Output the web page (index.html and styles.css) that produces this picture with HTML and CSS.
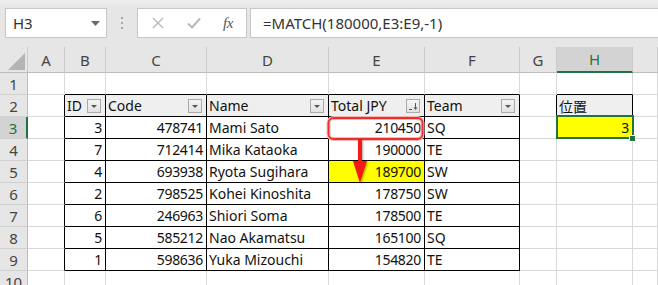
FILE: index.html
```html
<!DOCTYPE html>
<html lang="ja">
<head>
<meta charset="utf-8">
<title>MATCH</title>
<link rel="stylesheet" href="styles.css">
</head>
<body>
<div class="app">
  <div class="fbar">
    <div class="namebox">
      <span class="nb-text">H3</span>
      <svg class="nb-dd" width="9" height="5" viewBox="0 0 9 5"><path d="M0 0h9L4.5 5z" fill="#6a6a6a"/></svg>
    </div>
    <div class="grip"><i></i><i></i><i></i></div>
    <div class="fbtns">
      <svg class="ico-x" width="12" height="12" viewBox="0 0 12 12"><path d="M1 1L11 11M11 1L1 11" stroke="#b8b8b8" stroke-width="1.4" fill="none"/></svg>
      <svg class="ico-ok" width="14" height="12" viewBox="0 0 14 12"><path d="M1 6.5L5 10.5L13 1.5" stroke="#b8b8b8" stroke-width="2" fill="none"/></svg>
      <span class="fx">fx</span>
    </div>
    <div class="finput">=MATCH(180000,E3:E9,-1)</div>
  </div>

  <div class="grid">
    <!-- header row -->
    <div class="c hd corner"><svg width="17" height="17" viewBox="0 0 17 17"><path d="M17 0V17H0z" fill="#b4b4b4"/></svg></div>
    <div class="c hd">A</div>
    <div class="c hd">B</div>
    <div class="c hd">C</div>
    <div class="c hd">D</div>
    <div class="c hd">E</div>
    <div class="c hd">F</div>
    <div class="c hd">G</div>
    <div class="c hd hsel">H</div>
    <div class="c hd"></div>

    <!-- row 1 -->
    <div class="c rh">1</div>
    <div class="c"></div>
    <div class="c tt"></div>
    <div class="c tt"></div>
    <div class="c tt"></div>
    <div class="c tt"></div>
    <div class="c tt"></div>
    <div class="c"></div>
    <div class="c tt"></div>
    <div class="c"></div>

    <!-- row 2 -->
    <div class="c rh">2</div>
    <div class="c tl"></div>
    <div class="c t th"><span>ID</span><span class="dd"><svg width="12" height="12" viewBox="0 0 12 12"><path d="M3 5h6l-3 3z" fill="#555"/></svg></span></div>
    <div class="c t th"><span>Code</span><span class="dd"><svg width="12" height="12" viewBox="0 0 12 12"><path d="M3 5h6l-3 3z" fill="#555"/></svg></span></div>
    <div class="c t th"><span>Name</span><span class="dd"><svg width="12" height="12" viewBox="0 0 12 12"><path d="M3 5h6l-3 3z" fill="#555"/></svg></span></div>
    <div class="c t th"><span>Total JPY</span><span class="dd"><svg width="12" height="12" viewBox="0 0 12 12"><path d="M2 9.5h3" stroke="#555" stroke-width="1"/><path d="M8.5 3v6" stroke="#555" stroke-width="1"/><path d="M6.5 7.5h4l-2 2.5z" fill="#555"/></svg></span></div>
    <div class="c t th"><span>Team</span><span class="dd"><svg width="12" height="12" viewBox="0 0 12 12"><path d="M3 5h6l-3 3z" fill="#555"/></svg></span></div>
    <div class="c tl"></div>
    <div class="c t th jp">位置</div>
    <div class="c"></div>

    <!-- row 3 -->
    <div class="c rh rsel">3</div>
    <div class="c tl"></div>
    <div class="c t num">3</div>
    <div class="c t num">478741</div>
    <div class="c t">Mami Sato</div>
    <div class="c t num">210450</div>
    <div class="c t">SQ</div>
    <div class="c"></div>
    <div class="c num yel active">3</div>
    <div class="c"></div>

    <!-- row 4 -->
    <div class="c rh">4</div>
    <div class="c tl"></div>
    <div class="c t num">7</div>
    <div class="c t num">712414</div>
    <div class="c t">Mika Kataoka</div>
    <div class="c t num">190000</div>
    <div class="c t">TE</div>
    <div class="c"></div>
    <div class="c"></div>
    <div class="c"></div>

    <!-- row 5 -->
    <div class="c rh">5</div>
    <div class="c tl"></div>
    <div class="c t num">4</div>
    <div class="c t num">693938</div>
    <div class="c t">Ryota Sugihara</div>
    <div class="c t num yel">189700</div>
    <div class="c t">SW</div>
    <div class="c"></div>
    <div class="c"></div>
    <div class="c"></div>

    <!-- row 6 -->
    <div class="c rh">6</div>
    <div class="c tl"></div>
    <div class="c t num">2</div>
    <div class="c t num">798525</div>
    <div class="c t">Kohei Kinoshita</div>
    <div class="c t num">178750</div>
    <div class="c t">SW</div>
    <div class="c"></div>
    <div class="c"></div>
    <div class="c"></div>

    <!-- row 7 -->
    <div class="c rh">7</div>
    <div class="c tl"></div>
    <div class="c t num">6</div>
    <div class="c t num">246963</div>
    <div class="c t">Shiori Soma</div>
    <div class="c t num">178500</div>
    <div class="c t">TE</div>
    <div class="c"></div>
    <div class="c"></div>
    <div class="c"></div>

    <!-- row 8 -->
    <div class="c rh">8</div>
    <div class="c tl"></div>
    <div class="c t num">5</div>
    <div class="c t num">585212</div>
    <div class="c t">Nao Akamatsu</div>
    <div class="c t num">165100</div>
    <div class="c t">SQ</div>
    <div class="c"></div>
    <div class="c"></div>
    <div class="c"></div>

    <!-- row 9 -->
    <div class="c rh">9</div>
    <div class="c tl"></div>
    <div class="c t num">1</div>
    <div class="c t num">598636</div>
    <div class="c t">Yuka Mizouchi</div>
    <div class="c t num">154820</div>
    <div class="c t">TE</div>
    <div class="c"></div>
    <div class="c"></div>
    <div class="c"></div>

    <!-- row 10 -->
    <div class="c rh">10</div>
    <div class="c"></div>
    <div class="c"></div>
    <div class="c"></div>
    <div class="c"></div>
    <div class="c"></div>
    <div class="c"></div>
    <div class="c"></div>
    <div class="c"></div>
    <div class="c"></div>
  </div>

  <svg class="annot" width="658" height="285" viewBox="0 0 658 285">
    <rect x="328.5" y="118" width="94" height="21" rx="5" ry="5" fill="none" stroke="#f7b7b7" stroke-width="4"/>
    <rect x="328.5" y="118" width="94" height="21" rx="5" ry="5" fill="none" stroke="#e8302c" stroke-width="1.8"/>
    <g class="arrow">
      <path d="M360 139V163" stroke="#f41a14" stroke-width="4"/>
      <path d="M353 161H367L360 183z" fill="#f41a14"/>
    </g>
  </svg>
</div>
</body>
</html>
```

FILE: styles.css
```css
html, body {
  margin: 0;
  padding: 0;
  background: #ffffff;
}

body {
  width: 658px;
  height: 285px;
  overflow: hidden;
  font-family: "Noto Sans", "Noto Sans CJK JP", sans-serif;
}

.app {
  position: relative;
  width: 658px;
  height: 285px;
  overflow: hidden;
  background: #ffffff;
}

/* ---------- formula bar ---------- */
.fbar {
  display: flex;
  align-items: flex-start;
  box-sizing: border-box;
  height: 47px;
  padding: 8px 0 0 5px;
  background: linear-gradient(#efefef 0, #e6e6e6 7px, #e6e6e6 100%);
}

.namebox {
  box-sizing: border-box;
  width: 102px;
  height: 30px;
  background: #ffffff;
  border: 1px solid #c6c6c6;
  display: flex;
  align-items: center;
  justify-content: space-between;
  padding: 0 6px 0 7px;
}

.nb-text {
  font-size: 15px;
  color: #333333;
}

.nb-dd {
  display: block;
}

.grip {
  width: 30px;
  height: 30px;
  display: flex;
  flex-direction: column;
  align-items: center;
  justify-content: center;
  gap: 3px;
}

.grip i {
  display: block;
  width: 2px;
  height: 2px;
  background: #a8a8a8;
}

.fbtns {
  box-sizing: border-box;
  width: 110px;
  height: 30px;
  background: #ffffff;
  border: 1px solid #c6c6c6;
  display: flex;
  align-items: center;
  padding-left: 14px;
}

.ico-x {
  display: block;
}

.ico-ok {
  display: block;
  margin-left: 23px;
}

.fx {
  margin-left: 22px;
  font-family: "Liberation Serif", serif;
  font-style: italic;
  font-size: 15px;
  color: #555555;
  letter-spacing: -0.5px;
}

.finput {
  box-sizing: border-box;
  flex: 1;
  height: 30px;
  margin-left: 3px;
  background: #ffffff;
  border: 1px solid #c6c6c6;
  border-right: none;
  display: flex;
  align-items: center;
  padding-left: 12px;
  font-size: 15px;
  color: #333333;
}

/* ---------- grid ---------- */
.grid {
  display: grid;
  grid-template-columns: 28px 37px 41px 101px 122px 96px 95px 37px 76px 1fr;
  grid-template-rows: 26px repeat(10, 22px);
}

.c {
  box-sizing: border-box;
  border-right: 1px solid #d9d9d9;
  border-bottom: 1px solid #d9d9d9;
  display: flex;
  align-items: center;
  padding: 0 3px 0 2px;
  font-size: 14px;
  color: #111111;
  white-space: nowrap;
  overflow: hidden;
  background: #ffffff;
}

.hd {
  background: #e6e6e6;
  justify-content: center;
  border-right: 1px solid #cbcbcb;
  border-bottom: 1px solid #bdbdbd;
  font-size: 15px;
  color: #444444;
  padding: 0;
}

.corner {
  justify-content: flex-end;
  align-items: flex-end;
  padding: 0 2px 2px 0;
}

.corner svg {
  display: block;
}

.hsel {
  background: #d3d3d3;
  color: #217346;
  border-bottom: 2px solid #217346;
}

.rh {
  background: #e6e6e6;
  justify-content: center;
  border-right: 1px solid #bdbdbd;
  border-bottom: 1px solid #d0d0d0;
  font-size: 15px;
  color: #444444;
  padding: 0;
}

.rsel {
  background: #d3d3d3;
  color: #217346;
  border-right: 2px solid #217346;
}

.tl {
  border-right-color: #000000;
}

.tt {
  border-bottom-color: #000000;
}

.t {
  border-right-color: #000000;
  border-bottom-color: #000000;
}

.th {
  background: #efefef;
  justify-content: space-between;
}

.jp {
  font-family: "Noto Sans CJK JP", sans-serif;
  font-size: 14px;
}

.dd {
  box-sizing: border-box;
  width: 14px;
  height: 14px;
  border: 1px solid #ababab;
  background: linear-gradient(#f4f4f4, #e2e2e2);
  display: flex;
  align-items: center;
  justify-content: center;
  margin-right: 1px;
}

.dd svg {
  display: block;
}

.num {
  justify-content: flex-end;
  letter-spacing: -0.3px;
}

.yel {
  background: #ffff00;
}

.active {
  position: relative;
  overflow: visible;
}

.active::after {
  content: "";
  position: absolute;
  left: -1px;
  top: -2px;
  right: -2px;
  bottom: -1px;
  border: 2px solid #217346;
  pointer-events: none;
}

.active::before {
  content: "";
  position: absolute;
  right: -4px;
  bottom: -4px;
  width: 5px;
  height: 5px;
  background: #217346;
  border: 1px solid #ffffff;
  z-index: 2;
}

/* ---------- annotation overlay ---------- */
.annot {
  position: absolute;
  left: 0;
  top: 0;
  pointer-events: none;
}

.arrow {
  filter: drop-shadow(1px 1px 1px rgba(0, 0, 0, 0.35));
}
```
